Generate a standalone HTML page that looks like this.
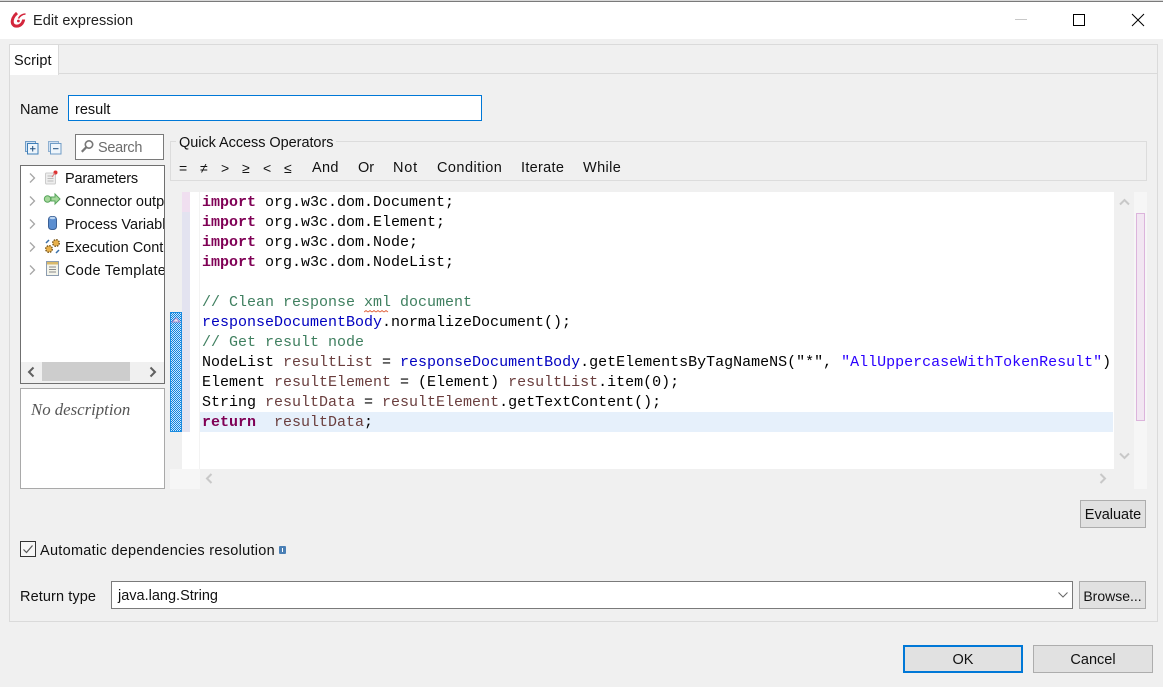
<!DOCTYPE html>
<html><head><meta charset="utf-8">
<style>
html,body{margin:0;padding:0;width:1163px;height:687px;overflow:hidden;background:#f0f0f0;}
body{position:relative;font-family:"Liberation Sans",sans-serif;font-size:14.5px;color:#111;}
.a{position:absolute;box-sizing:border-box;white-space:nowrap;}
.t{position:absolute;white-space:nowrap;line-height:20px;height:20px;}
.code{position:absolute;left:202px;font-family:"Liberation Mono",monospace;font-size:15px;line-height:20px;height:20px;white-space:pre;color:#000;}
.k{color:#7f0055;font-weight:bold}.c{color:#3f7f5f}.f{color:#0000c0}.v{color:#6a3e3e}.s{color:#2a00ff}
.btn{position:absolute;box-sizing:border-box;background:#e1e1e1;border:1px solid #adadad;text-align:center;}
</style></head>
<body>
<!-- title bar -->
<div class="a" style="left:0;top:0;width:1163px;height:1px;background:#d8d8d8"></div>
<div class="a" style="left:0;top:1px;width:1163px;height:1px;background:#7a7a7a"></div>
<div class="a" style="left:0;top:2px;width:1163px;height:37px;background:#fff"></div>
<svg class="a" style="left:9px;top:11px" width="18" height="18" viewBox="0 0 18 18"><path d="M8 2C4.5 5 2.5 9 3.5 12.5C5 16 10 16 13 12.5C14 11 14.6 10 14.6 8.5" fill="none" stroke="#d3263c" stroke-width="3"/><path d="M16.5 3C13.5 3 10.5 5 9.5 7.5" fill="none" stroke="#d3263c" stroke-width="1.6"/><circle cx="9.4" cy="10" r="1.4" fill="#d3263c"/></svg>
<div class="t" style="left:33px;top:11px;font-size:14.5px;color:#222;letter-spacing:.07px">Edit expression</div>
<div class="a" style="left:1015px;top:19px;width:12px;height:1px;background:#c8c8c8"></div>
<div class="a" style="left:1073px;top:14px;width:12px;height:12px;border:1px solid #000"></div>
<svg class="a" style="left:1131px;top:13px" width="14" height="14" viewBox="0 0 14 14"><path d="M1 1L13 13M13 1L1 13" stroke="#000" stroke-width="1" fill="none"/></svg>

<!-- tab folder -->
<div class="a" style="left:9px;top:73px;width:1149px;height:549px;border:1px solid #dadada;background:#f0f0f0"></div>
<div class="a" style="left:9px;top:44px;width:1149px;height:30px;border:1px solid #dadada;background:#f0f0f0"></div>
<div class="a" style="left:10px;top:45px;width:49px;height:30px;background:#fff;border-right:1px solid #dadada"></div>
<div class="t" style="left:14px;top:51px;letter-spacing:.1px">Script</div>

<!-- name -->
<div class="t" style="left:20px;top:100px">Name</div>
<div class="a" style="left:68px;top:95px;width:414px;height:26px;border:1px solid #0078d7;background:#fff"></div>
<div class="t" style="left:75px;top:100px">result</div>

<!-- tree toolbar -->
<svg class="a" style="left:24px;top:140px" width="16" height="16" viewBox="0 0 16 16"><rect x="1.5" y="1.5" width="10" height="10" fill="#cfe0f2" stroke="#6f9cc6"/><rect x="3.5" y="3.5" width="10.5" height="10.5" fill="#eef5fb" stroke="#3f7fb8"/><path d="M6 8.7h5.5M8.7 6v5.5" stroke="#1f4f80"/></svg>
<svg class="a" style="left:47px;top:140px" width="16" height="16" viewBox="0 0 16 16"><rect x="1.5" y="1.5" width="10" height="10" fill="#cfe0f2" stroke="#8fb0d0"/><rect x="3.5" y="3.5" width="10.5" height="10.5" fill="#eef5fb" stroke="#6f9cc6"/><path d="M6 8.7h5.5" stroke="#1f4f80"/></svg>
<div class="a" style="left:75px;top:134px;width:89px;height:26px;border:1px solid #7a7a7a;background:#fff"></div>
<svg class="a" style="left:80px;top:139px" width="15" height="15" viewBox="0 0 15 15"><circle cx="9" cy="5.5" r="3.7" fill="none" stroke="#777" stroke-width="1.6"/><path d="M6.2 8.3L1.8 12.8" stroke="#777" stroke-width="2.2"/></svg>
<div class="t" style="left:98px;top:138px;color:#6d6d6d;letter-spacing:-.3px">Search</div>

<!-- tree -->
<div class="a" style="left:20px;top:165px;width:145px;height:219px;border:1px solid #6f6f6f;background:#fff"></div>
<div class="a" style="left:21px;top:166px;width:143px;height:192px;overflow:hidden">
  <div class="t" style="left:44px;top:3px;letter-spacing:-.2px">Parameters</div>
  <div class="t" style="left:44px;top:26px">Connector output</div>
  <div class="t" style="left:44px;top:49px">Process Variables</div>
  <div class="t" style="left:44px;top:72px">Execution Context</div>
  <div class="t" style="left:44px;top:95px;letter-spacing:.3px">Code Templates</div>
</div>
<svg class="a" style="left:28px;top:172px" width="10" height="110" viewBox="0 0 10 110" fill="none" stroke="#a6a6a6" stroke-width="1.3"><path d="M2 1.5L6.5 6L2 10.5M2 24.5L6.5 29L2 33.5M2 47.5L6.5 52L2 56.5M2 70.5L6.5 75L2 79.5M2 93.5L6.5 98L2 102.5"/></svg>
<svg class="a" style="left:44px;top:169px" width="16" height="16" viewBox="0 0 16 16"><rect x="1.5" y="4" width="10" height="11" rx="1" fill="#eee" stroke="#ccc"/><path d="M3.5 7h6M3.5 9.5h6M3.5 12h6" stroke="#bbb"/><circle cx="11.5" cy="3.5" r="2" fill="#d33"/><path d="M8 8l3-4" stroke="#d77"/></svg>
<svg class="a" style="left:43px;top:192px" width="18" height="14" viewBox="0 0 18 14"><circle cx="4.5" cy="7" r="3.2" fill="#a5d89b" stroke="#58a55c"/><path d="M8 5h4V2l5 5-5 5V9H8z" fill="#a5d89b" stroke="#58a55c"/></svg>
<svg class="a" style="left:47px;top:215px" width="11" height="16" viewBox="0 0 11 16"><rect x="1.5" y="1.5" width="8" height="13" rx="3" fill="#5b8ed0" stroke="#3a5f95"/><ellipse cx="5.5" cy="3" rx="3" ry="1.2" fill="#bcd5f0"/></svg>
<svg class="a" style="left:44px;top:238px" width="17" height="17" viewBox="0 0 17 17"><circle cx="5" cy="11" r="3.3" fill="#e8b04a" stroke="#7a5a20" stroke-width="1.4" stroke-dasharray="1.6 1"/><circle cx="12" cy="5" r="3.3" fill="#e8b04a" stroke="#7a5a20" stroke-width="1.4" stroke-dasharray="1.6 1"/><path d="M2 5l3-3M12 15l3-3" stroke="#3a6fa8" stroke-width="1.5"/></svg>
<svg class="a" style="left:46px;top:261px" width="13" height="16" viewBox="0 0 13 16"><rect x=".5" y=".5" width="12" height="14" fill="#f4f4ea" stroke="#8c9cb0"/><rect x="1" y="1" width="11" height="2.5" fill="#d9b96a"/><path d="M3 6h7M3 8.5h7M3 11h7" stroke="#8a8a8a"/></svg>
<!-- tree hscroll -->
<div class="a" style="left:21px;top:362px;width:143px;height:21px;background:#f0f0f0"></div>
<div class="a" style="left:42px;top:362px;width:88px;height:19px;background:#cdcdcd"></div>
<svg class="a" style="left:26px;top:366px" width="10" height="12" viewBox="0 0 10 12"><path d="M7.5 1.5L3 6l4.5 4.5" fill="none" stroke="#606060" stroke-width="2"/></svg>
<svg class="a" style="left:148px;top:366px" width="10" height="12" viewBox="0 0 10 12"><path d="M2.5 1.5L7 6l-4.5 4.5" fill="none" stroke="#606060" stroke-width="2"/></svg>

<!-- description -->
<div class="a" style="left:20px;top:388px;width:145px;height:101px;border:1px solid #a9a9a9;background:#fff"></div>
<div class="t" style="left:31px;top:400px;font-family:'Liberation Serif',serif;font-style:italic;font-size:16.8px;color:#555">No description</div>

<!-- Quick access -->
<div class="a" style="left:170px;top:141px;width:977px;height:40px;border:1px solid #dcdcdc"></div>
<div class="a" style="left:176px;top:134px;width:160px;height:14px;background:#f0f0f0"></div>
<div class="t" style="left:179px;top:133px;letter-spacing:-.05px">Quick Access Operators</div>
<div class="t" style="left:179px;top:158px;font-size:14px">=</div>
<div class="t" style="left:200px;top:158px;font-size:14px">≠</div>
<div class="t" style="left:221px;top:158px;font-size:14px">&gt;</div>
<div class="t" style="left:242px;top:158px;font-size:14px">≥</div>
<div class="t" style="left:263px;top:158px;font-size:14px">&lt;</div>
<div class="t" style="left:284px;top:158px;font-size:14px">≤</div>
<div class="t" style="left:312px;top:158px;letter-spacing:.3px">And</div>
<div class="t" style="left:358px;top:158px">Or</div>
<div class="t" style="left:393px;top:158px;letter-spacing:.8px">Not</div>
<div class="t" style="left:437px;top:158px;letter-spacing:.45px">Condition</div>
<div class="t" style="left:521px;top:158px;letter-spacing:.3px">Iterate</div>
<div class="t" style="left:583px;top:158px;letter-spacing:.4px">While</div>

<!-- editor -->
<div class="a" style="left:182px;top:192px;width:932px;height:277px;background:#fff"></div>
<div class="a" style="left:182px;top:192px;width:8px;height:20px;background:#f0dff0"></div>
<div class="a" style="left:182px;top:212px;width:8px;height:220px;background:#e3e3f0"></div>
<div class="a" style="left:199px;top:192px;width:1px;height:277px;background:#f3f3f3"></div>
<div class="a" style="left:170px;top:312px;width:12px;height:120px;background-color:#0a84e0;background-image:repeating-conic-gradient(#cfe6fa 0 25%,#0a84e0 0 50%);background-size:2px 2px;border:1px solid #1c8ce0"></div>
<svg class="a" style="left:171px;top:316px" width="10" height="8" viewBox="0 0 10 8"><path d="M1 6L5 2l4 4z" fill="#e9e6f5" stroke="#9a86c9"/></svg>
<div class="a" style="left:200px;top:412px;width:913px;height:20px;background:#e6f0fb"></div>

<div class="code" style="top:193px"><span class="k">import</span> org.w3c.dom.Document;</div>
<div class="code" style="top:213px"><span class="k">import</span> org.w3c.dom.Element;</div>
<div class="code" style="top:233px"><span class="k">import</span> org.w3c.dom.Node;</div>
<div class="code" style="top:253px"><span class="k">import</span> org.w3c.dom.NodeList;</div>
<div class="code" style="top:293px"><span class="c">// Clean response xml document</span></div>
<svg class="a" style="left:364px;top:310px" width="28" height="4" viewBox="0 0 28 4"><path d="M0 2l2-1.5 2 1.5 2-1.5 2 1.5 2-1.5 2 1.5 2-1.5 2 1.5 2-1.5 2 1.5 2-1.5 2 1.5" fill="none" stroke="#e0603a" stroke-width=".8"/></svg>
<div class="code" style="top:313px"><span class="f">responseDocumentBody</span>.normalizeDocument();</div>
<div class="code" style="top:333px"><span class="c">// Get result node</span></div>
<div class="code" style="top:353px">NodeList <span class="v">resultList</span> = <span class="f">responseDocumentBody</span>.getElementsByTagNameNS("*", <span class="s">"AllUppercaseWithTokenResult"</span>)</div>
<div class="code" style="top:373px">Element <span class="v">resultElement</span> = (Element) <span class="v">resultList</span>.item(0);</div>
<div class="code" style="top:393px">String <span class="v">resultData</span> = <span class="v">resultElement</span>.getTextContent();</div>
<div class="code" style="top:413px"><span class="k">return</span>  <span class="v">resultData</span>;</div>

<!-- editor scrollbars -->
<div class="a" style="left:170px;top:469px;width:30px;height:20px;background:#f6f6f6"></div>
<svg class="a" style="left:204px;top:472px" width="10" height="13" viewBox="0 0 10 13"><path d="M7.5 2L3 6.5 7.5 11" fill="none" stroke="#c8c8c8" stroke-width="2"/></svg>
<svg class="a" style="left:1098px;top:472px" width="10" height="13" viewBox="0 0 10 13"><path d="M2.5 2L7 6.5 2.5 11" fill="none" stroke="#c8c8c8" stroke-width="2"/></svg>
<svg class="a" style="left:1118px;top:197px" width="13" height="10" viewBox="0 0 13 10"><path d="M2 7.5L6.5 3 11 7.5" fill="none" stroke="#c8c8c8" stroke-width="2"/></svg>
<svg class="a" style="left:1118px;top:451px" width="13" height="10" viewBox="0 0 13 10"><path d="M2 2.5L6.5 7 11 2.5" fill="none" stroke="#c8c8c8" stroke-width="2"/></svg>
<div class="a" style="left:1134px;top:192px;width:13px;height:297px;background:#f6f6f6"></div>
<div class="a" style="left:1136px;top:213px;width:9px;height:208px;background:#f2e6f2;border:1px solid #dcb4dc"></div>

<!-- Evaluate -->
<div class="btn" style="left:1080px;top:500px;width:66px;height:28px;line-height:28px">Evaluate</div>

<!-- checkbox -->
<div class="a" style="left:20px;top:541px;width:16px;height:16px;border:1px solid #333;background:#f6f6f6"></div>
<svg class="a" style="left:22px;top:543px" width="12" height="12" viewBox="0 0 12 12"><path d="M1.5 6.5L4.5 9.5 10.5 2.5" fill="none" stroke="#555" stroke-width="1.2"/></svg>
<div class="t" style="left:40px;top:541px;letter-spacing:.28px">Automatic dependencies resolution</div>
<div class="a" style="left:279px;top:546px;width:7px;height:8px;background:#4a7fb5;border-radius:1px"></div>
<div class="a" style="left:282px;top:548px;width:1px;height:4px;background:#fff"></div>

<!-- return type -->
<div class="t" style="left:20px;top:587px;letter-spacing:.1px">Return type</div>
<div class="a" style="left:111px;top:581px;width:962px;height:28px;border:1px solid #7a7a7a;background:#fff"></div>
<div class="t" style="left:118px;top:586px">java.lang.String</div>
<svg class="a" style="left:1057px;top:591px" width="12" height="8" viewBox="0 0 12 8"><path d="M1.5 1.5L6 6l4.5-4.5" fill="none" stroke="#666" stroke-width="1"/></svg>
<div class="btn" style="left:1079px;top:581px;width:67px;height:28px;line-height:28px;font-size:14px">Browse...</div>

<!-- OK/Cancel -->
<div class="btn" style="left:903px;top:645px;width:120px;height:28px;border:2px solid #0078d7;line-height:26px">OK</div>
<div class="btn" style="left:1033px;top:645px;width:120px;height:28px;line-height:28px">Cancel</div>
</body></html>
